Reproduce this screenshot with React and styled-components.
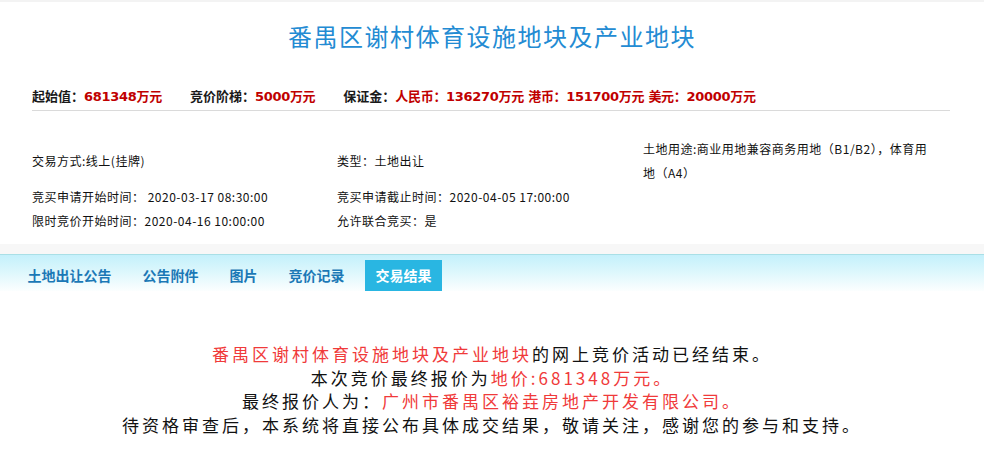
import React from "react";
import styled, { createGlobalStyle } from "styled-components";

const Global = createGlobalStyle`
  html, body { margin: 0; padding: 0; background: #fff; }
  body { font-family: "Noto Sans CJK SC", "Liberation Sans", sans-serif; color: #111; }
`;

const Page = styled.div`
  width: 984px;
  min-height: 465px;
  background: #fff;
  overflow: hidden;
`;

const TopStrip = styled.div`
  height: 2px;
  background: #f3f3f3;
`;

const Title = styled.h1`
  margin: 0;
  padding-top: 19px;
  text-align: center;
  font-size: 24px;
  line-height: 30px;
  font-weight: 400;
  letter-spacing: 1.5px;
  color: #238bd3;
`;

const PriceBar = styled.div`
  margin: 35px 34px 0 32px;
  padding-bottom: 3px;
  border-bottom: 1px solid #dadada;
  display: flex;
  align-items: center;
  line-height: 20px;
  font-size: 13px;
  font-weight: 700;
  font-family: "DejaVu Sans", "Noto Sans CJK SC", sans-serif;
`;

const PriceItem = styled.span`
  margin-right: 28px;
  white-space: nowrap;
`;

const PriceLabel = styled.span`
  color: #1a1a1a;
  font-family: "Noto Sans CJK SC", sans-serif;
`;

const PriceValue = styled.span`
  color: #c00000;
  letter-spacing: -0.3px;
`;

const InfoGrid = styled.div`
  margin-top: 26px;
  padding: 0 34px 0 32px;
  display: grid;
  grid-template-columns: 305px 306px 290px;
  align-items: center;
  font-size: 12px;
  line-height: 24px;
  letter-spacing: 0.5px;
  color: #111;
`;

const Cell = styled.div`
  white-space: ${(p) => (p.$wrap ? "normal" : "nowrap")};
`;

const GreyBand = styled.div`
  margin-top: 11px;
  height: 10px;
  background: #f7f7f7;
`;

const TabBar = styled.div`
  border-top: 1px solid #a9dfe6;
  background: linear-gradient(to bottom, #c4f0fb 0px, #d8f6fc 14px, #ffffff 38px);
  padding: 5px 0 0 17px;
  display: flex;
  gap: 10px;
`;

const Tab = styled.div`
  height: 31px;
  line-height: 31px;
  padding: 0 10.5px;
  font-size: 14px;
  font-weight: 700;
  color: ${(p) => (p.$active ? "#ffffff" : "#1b78b6")};
  background: ${(p) => (p.$active ? "#29b6e2" : "transparent")};
`;

const Result = styled.div`
  margin-top: 51px;
  text-align: center;
  font-size: 17px;
  line-height: 23.6px;
  letter-spacing: 3px;
  color: #111;
`;

const Line = styled.div``;

const Red = styled.span`
  color: #f03a3a;
`;

export default function App() {
  return (
    <Page>
      <Global />
      <TopStrip />
      <Title>番禺区谢村体育设施地块及产业地块</Title>
      <PriceBar>
        <PriceItem>
          <PriceLabel>起始值：</PriceLabel>
          <PriceValue>681348万元</PriceValue>
        </PriceItem>
        <PriceItem>
          <PriceLabel>竞价阶梯：</PriceLabel>
          <PriceValue>5000万元</PriceValue>
        </PriceItem>
        <PriceItem>
          <PriceLabel>保证金：</PriceLabel>
          <PriceValue>人民币：136270万元 港币：151700万元 美元：20000万元</PriceValue>
        </PriceItem>
      </PriceBar>
      <InfoGrid>
        <Cell>交易方式:线上(挂牌)</Cell>
        <Cell>类型：土地出让</Cell>
        <Cell $wrap>土地用途:商业用地兼容商务用地（B1/B2），体育用地（A4）</Cell>
        <Cell>竞买申请开始时间：&nbsp;2020-03-17 08:30:00</Cell>
        <Cell>竞买申请截止时间：2020-04-05 17:00:00</Cell>
        <Cell />
        <Cell>限时竞价开始时间：2020-04-16 10:00:00</Cell>
        <Cell>允许联合竞买：是</Cell>
        <Cell />
      </InfoGrid>
      <GreyBand />
      <TabBar>
        <Tab>土地出让公告</Tab>
        <Tab>公告附件</Tab>
        <Tab>图片</Tab>
        <Tab>竞价记录</Tab>
        <Tab $active>交易结果</Tab>
      </TabBar>
      <Result>
        <Line>
          <Red>番禺区谢村体育设施地块及产业地块</Red>的网上竞价活动已经结束。
        </Line>
        <Line>
          本次竞价最终报价为<Red>地价:681348万元。</Red>
        </Line>
        <Line>
          最终报价人为：<Red>广州市番禺区裕垚房地产开发有限公司。</Red>
        </Line>
        <Line>待资格审查后，本系统将直接公布具体成交结果，敬请关注，感谢您的参与和支持。</Line>
      </Result>
    </Page>
  );
}
